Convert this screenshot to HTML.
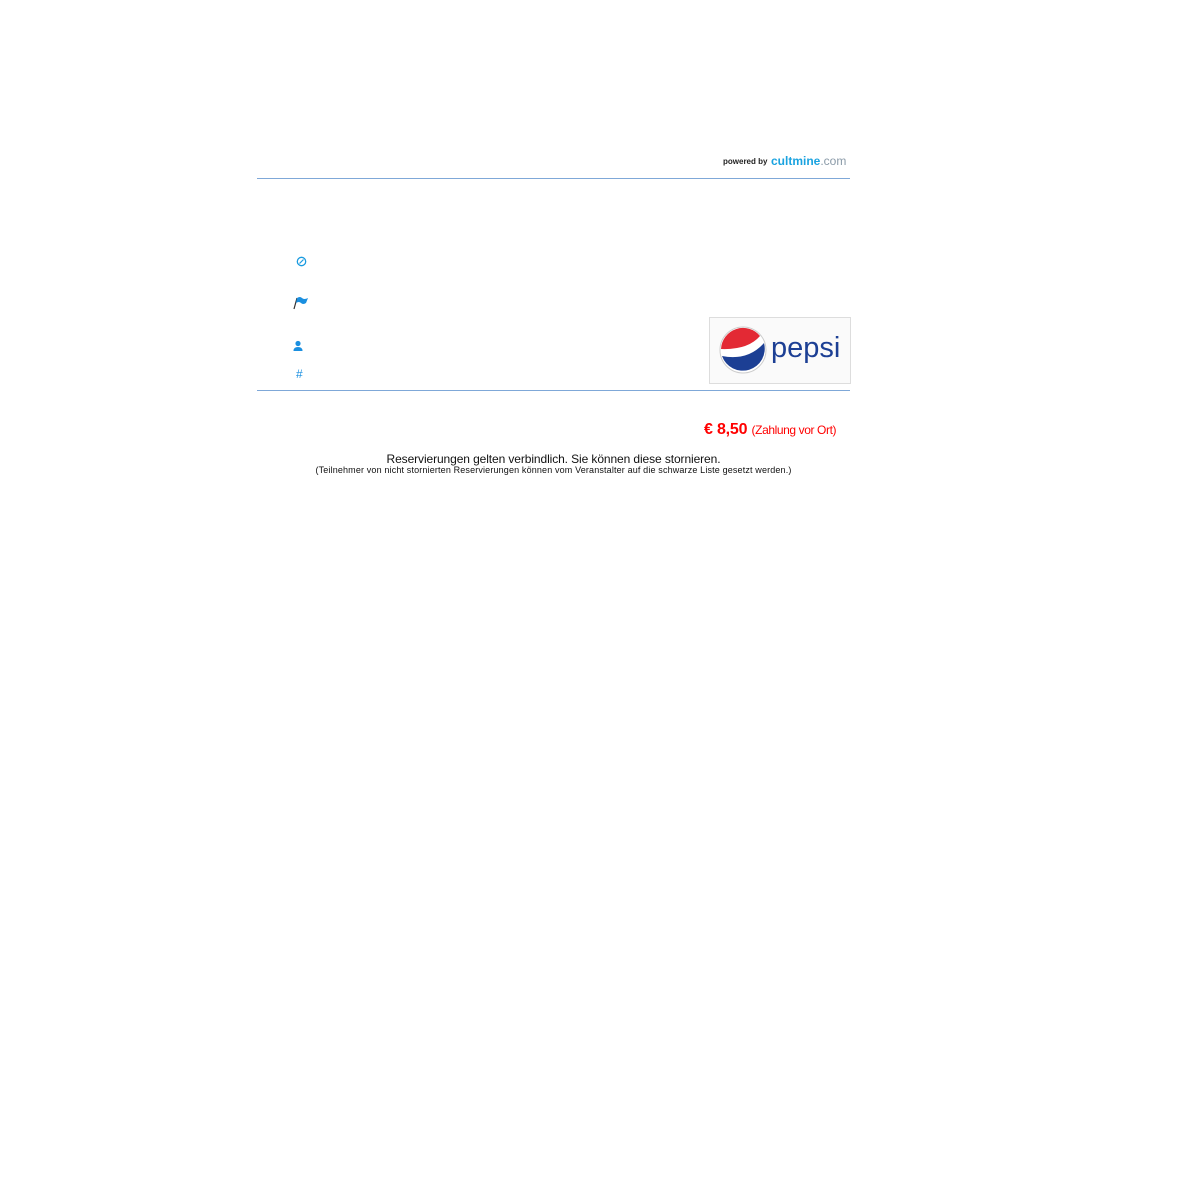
<!DOCTYPE html>
<html><head><meta charset="utf-8"><style>
body{margin:0;background:#fff;font-family:"Liberation Sans",Arial,sans-serif;}
.a{position:absolute}
</style></head><body>
<div class="a" style="left:723px;top:157px;font-size:8px;font-weight:bold;color:#222">powered by</div>
<div class="a" style="left:771px;top:154px;font-size:12px;font-weight:bold;color:#1aa3e0">cultmine<span style="color:#8a9aa8;font-weight:normal">.com</span></div>
<div class="a" style="left:257px;top:178px;width:593px;height:1px;background:#7fa8d8"></div>
<svg class="a" style="left:296px;top:256px" width="11" height="11" viewBox="0 0 11 11"><circle cx="5.5" cy="5.5" r="4.2" fill="none" stroke="#1a9be0" stroke-width="1.3"/><path d="M3.5 7.5L7.5 3.5" stroke="#1a9be0" stroke-width="1.2"/></svg>
<svg class="a" style="left:292px;top:296px" width="18" height="14" viewBox="0 0 18 14"><path d="M2 13L5 2" stroke="#333" stroke-width="1.2"/><path d="M5 2Q8 0 10 2T16 2L14 7Q11 9 9 7T4 7Z" fill="#1a8fe0"/></svg>
<svg class="a" style="left:292px;top:340px" width="12" height="12" viewBox="0 0 12 12"><circle cx="6" cy="3.5" r="2.6" fill="#1a8fe0"/><path d="M1.5 11Q1.5 7 6 7T10.5 11Z" fill="#1a8fe0"/></svg>
<div class="a" style="left:296px;top:367px;font-size:12px;color:#1a8fe0">#</div>
<div class="a" style="left:709px;top:317px;width:140px;height:65px;border:1px solid #ddd;background:#fafafa"></div>
<svg class="a" style="left:718px;top:325px" width="50" height="50" viewBox="0 0 50 50"><circle cx="25" cy="25" r="23" fill="#fff" stroke="#ccc"/><path d="M3 24A22 22 0 0 1 42 11Q30 25 3 24Z" fill="#e32934"/><path d="M4 31Q30 36 46 18A22 22 0 0 1 4 31Z" fill="#1c3f94"/></svg>
<div class="a" style="left:771px;top:332px;font-size:29px;color:#1c3f94">pepsi</div>
<div class="a" style="left:257px;top:390px;width:593px;height:1px;background:#7fa8d8"></div>
<div class="a" style="left:704px;top:421px;font-size:16px;color:#f00;letter-spacing:-0.2px"><b>€ 8,50</b> <span style="font-size:12px;letter-spacing:-0.4px">(Zahlung vor Ort)</span></div>
<div class="a" style="left:257px;width:593px;top:452px;font-size:12px;color:#111;text-align:center;letter-spacing:-0.1px">Reservierungen gelten verbindlich. Sie können diese stornieren.</div>
<div class="a" style="left:257px;width:593px;top:465px;font-size:9px;color:#111;text-align:center;letter-spacing:0.15px">(Teilnehmer von nicht stornierten Reservierungen können vom Veranstalter auf die schwarze Liste gesetzt werden.)</div>
</body></html>
